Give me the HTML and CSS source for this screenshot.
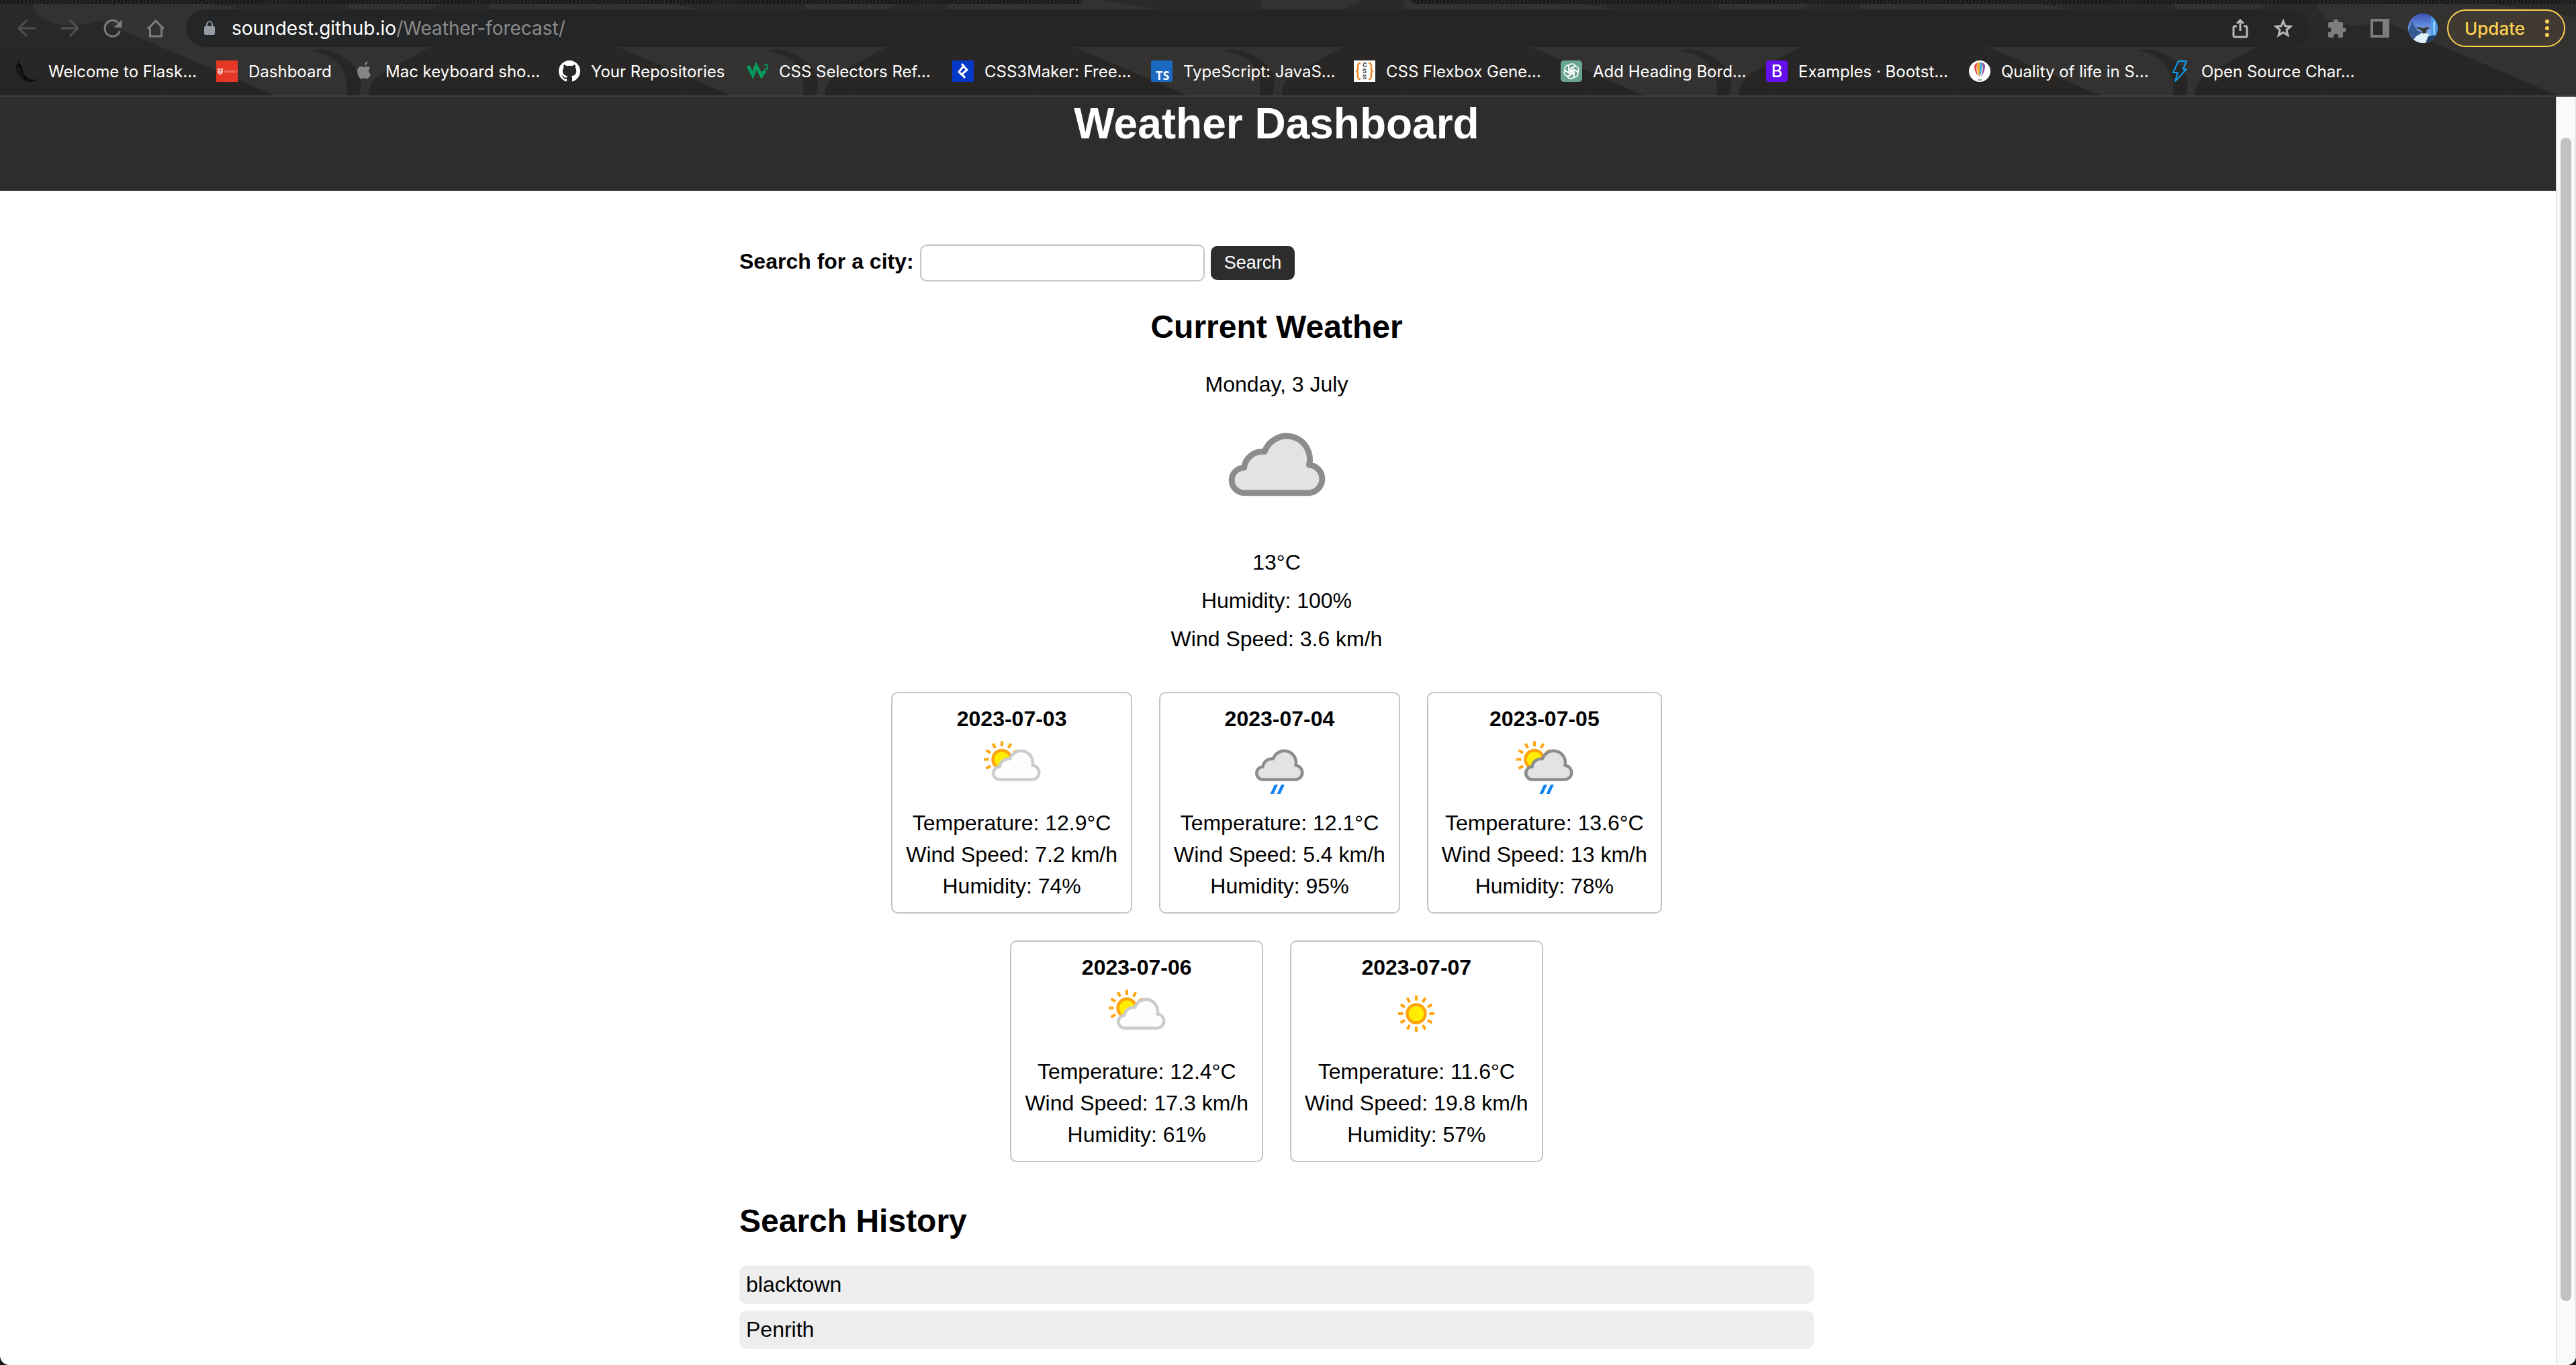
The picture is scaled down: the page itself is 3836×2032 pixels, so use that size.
FILE: index.html
```html
<!DOCTYPE html>
<html lang="en">
<head>
<meta charset="utf-8">
<title>Weather Dashboard</title>
<link rel="stylesheet" href="styles.css">
</head>
<body>
<svg class="sprite" width="0" height="0" aria-hidden="true">
  <defs>
    <path id="cloud-shape" stroke-width="9" stroke-linejoin="round" d="M52 127H146A21 21 0 0 0 149 85A35 35 0 0 0 82 65A28 28 0 0 0 51 89A19 19 0 0 0 52 127Z"/>
    <path id="rain-drops" fill="#0f84f0" d="M86 170L99 142H109L96 170ZM106 170L119 142H129L116 170Z"/>
    <g id="sun-shape">
      <circle r="27" fill="#ffee00" stroke="#ffa40d" stroke-width="9"/>
      <path stroke="#ffa40d" stroke-width="8" d="M0-39V-54M0 39V54M-39 0H-54M39 0H54M19.500-33.800L27-46.800M33.800-19.500L46.800-27M33.800 19.500L46.800 27M19.500 33.800L27 46.800M-19.500 33.800L-27 46.800M-33.800 19.500L-46.800 27M-33.800-19.500L-46.800-27M-19.500-33.800L-27-46.800"/>
    </g>
    <symbol id="cloudy" viewBox="0 -2 200 200"><use href="#cloud-shape" fill="#e3e3e6" stroke="#8b8c8e"/></symbol>
    <symbol id="partly-cloudy" viewBox="0 0 200 200"><use href="#sun-shape" x="70" y="67"/><use href="#cloud-shape" x="12" fill="#fdfdfd" stroke="#cbcccc"/></symbol>
    <symbol id="rain" viewBox="0 0 200 200"><use href="#cloud-shape" fill="#e3e3e6" stroke="#8b8c8e"/><use href="#rain-drops" x="-13"/></symbol>
    <symbol id="sun-rain" viewBox="0 0 200 200"><use href="#sun-shape" x="70" y="67"/><use href="#cloud-shape" x="12" fill="#e3e3e6" stroke="#8b8c8e"/><use href="#rain-drops" x="-1"/></symbol>
    <symbol id="sunny" viewBox="0 0 200 200"><use href="#sun-shape" x="100" y="84"/></symbol>
  </defs>
</svg>

<div class="browser">
  <svg class="theme" aria-hidden="true">
    <defs>
      <pattern id="theme-tile" width="680" height="144" patternUnits="userSpaceOnUse">
        <path fill="#333231" d="M49 0Q52 38 110 38Q135 36 147 30L413 144H516Q522 85 464 76Q480 68 510 84Q548 108 534 144H549Q545 118 585 100L640 70L520 40L280 0H80Q92 26 122 22Q95 12 84 0ZM517 0H667L640 14H520Z"/>
      </pattern>
    </defs>
    <rect width="100%" height="100%" fill="url(#theme-tile)"/>
  </svg>
  <div class="tab-strip"><span class="tab-strip__inactive"></span><span class="tab-strip__active"></span><span class="tab-strip__rest"></span></div>
  <div class="toolbar">
    <nav class="nav" aria-label="Navigation">
      <button class="icon-button dim" aria-label="Back"><svg viewBox="0 0 28 28"><path d="M27 14H2M14 2L2 14L14 26"/></svg></button>
      <button class="icon-button dim" aria-label="Forward"><svg viewBox="0 0 28 28"><path d="M1 14H26M14 2L26 14L14 26"/></svg></button>
      <button class="icon-button" aria-label="Reload"><svg viewBox="0 0 28 28"><path d="M24.500 18A11.500 12 0 1 1 22 6" /><path class="solid" d="M27.500 1V13H15.500Z"/></svg></button>
      <button class="icon-button" aria-label="Home"><svg viewBox="0 0 28 28"><path d="M2 15L14 3L26 15M5.500 12V26H22.500V12"/></svg></button>
    </nav>
    <div class="address">
      <svg class="lock" viewBox="0 0 16 22" aria-hidden="true"><path d="M4 10V5.500a4 4.500 0 0 1 8 0V10" fill="none" stroke="#949ba2" stroke-width="2"/><rect y="8" width="16" height="13" rx="2" fill="#949ba2"/></svg>
      <a class="url" href="#">soundest.github.io<span class="url__path">/Weather-forecast/</span></a>
      <button class="icon-button light" aria-label="Share"><svg viewBox="0 0 28 28"><path d="M9 11H6Q4 11 4 13V25Q4 27 6 27H22Q24 27 24 25V13Q24 11 22 11H19M14 18V2M9 7L14 2L19 7"/></svg></button>
      <button class="icon-button light" aria-label="Bookmark this page"><svg viewBox="0 0 28 28"><path d="M14 3.500L17 10.800L25 11.400L18.900 16.500L20.900 24.500L14 20.200L7.100 24.500L9.100 16.500L3 11.400L11 10.800Z"/></svg></button>
    </div>
    <div class="actions">
      <button class="icon-button" aria-label="Extensions"><svg viewBox="0 0 28 28"><path class="solid" d="M3 5H9V4A3.500 3.500 0 0 1 16 4V5H21Q23 5 23 7V13H24A3.500 3.500 0 0 1 24 20H23V26Q23 28 21 28H16V26A3.500 3.500 0 0 0 9 26V28H3Q1 28 1 26V20H2A3.500 3.500 0 0 0 2 13H1V7Q1 5 3 5Z"/></svg></button>
      <button class="icon-button" aria-label="Side panel"><svg viewBox="0 0 28 28"><path class="solid" fill-rule="evenodd" d="M0 0H28V28H0ZM4 4V24H18V4Z"/></svg></button>
      <button class="icon-button avatar" aria-label="Profile"><svg viewBox="0 0 44 44"><defs><linearGradient id="sky" x2="0" y2="1"><stop offset="0" stop-color="#3c4fb0"/><stop offset=".5" stop-color="#6c9be6"/><stop offset="1" stop-color="#a9cdec"/></linearGradient><clipPath id="round"><circle cx="22" cy="22" r="22"/></clipPath></defs><g clip-path="url(#round)"><rect width="44" height="44" fill="url(#sky)"/><path fill="#355a91" d="M0 26L6 12L13 25L22 29L18 44H0Z"/><path fill="#4b9be6" d="M34 4L44 12V36H34Z"/><path fill="#9dd0ff" d="M37 14L40 11V32H38Z"/><path fill="#dff0fa" d="M12 34L22 28L31 31L32 44H14L8 39Z"/><path fill="#1d3c68" d="M30 34L44 32V44H26Z"/><path fill="#3c3a38" d="M11 22L16 20L22 22L28 20L33 22L28 24L27 29L22 30L20 26L16 23Z"/></g></svg></button>
      <button class="update">Update<svg viewBox="0 0 6 26" aria-hidden="true"><circle cx="3" cy="3" r="3"/><circle cx="3" cy="13" r="3"/><circle cx="3" cy="23" r="3"/></svg></button>
    </div>
  </div>
  <nav class="bookmarks" aria-label="Bookmarks">
    <a href="#"><svg viewBox="0 0 32 32"><path fill="#0c0c0c" d="M3 0L5 5Q9 6 9 9Q9 23 20 28L31 29Q25 33 17 31Q3 26 0 11Q0 6 3 5Z"/><path d="M3 10Q5 20 12 26" fill="none" stroke="#3a3a3a"/></svg><span>Welcome to Flask…</span></a>
    <a href="#"><svg viewBox="0 0 32 32"><rect width="32" height="32" fill="#e63626"/><path fill="#fbdcd8" d="M2 12H10V17Q9 20 6 21Q3 20 2 17Z"/><path d="M2 15H10M6 12V20" stroke="#e63626"/><text x="12" y="18" font-size="5" fill="#fbdcd8" font-family="Liberation Serif, serif">SYDNEY</text></svg><span>Dashboard</span></a>
    <a href="#"><svg viewBox="0 0 32 32"><path fill="#858585" d="M21.500 1Q22 5 17 8Q16 4 21.500 1ZM16 10Q22 7 25.500 11Q20 15 26 21Q23 28 19.500 27Q16 25.500 13 27Q9 28 6.500 20Q5 11 10 9Q12 8 16 10Z"/></svg><span>Mac keyboard sho…</span></a>
    <a href="#"><svg viewBox="0 0 16 16"><path fill="#fff" d="M8 0C3.580 0 0 3.580 0 8c0 3.540 2.290 6.530 5.470 7.590.4.070.55-.17.55-.38 0-.19-.01-.82-.01-1.490-2.010.37-2.530-.49-2.690-.94-.09-.23-.48-.94-.82-1.130-.28-.15-.68-.52-.01-.53.63-.01 1.080.58 1.230.82.72 1.210 1.870.87 2.330.66.07-.52.28-.87.51-1.070-1.780-.2-3.640-.89-3.640-3.950 0-.87.31-1.590.82-2.150-.08-.2-.36-1.020.08-2.120 0 0 .67-.21 2.200.82a7.600 7.600 0 0 1 4 0c1.530-1.040 2.200-.82 2.200-.82.44 1.100.16 1.920.08 2.120.51.56.82 1.270.82 2.150 0 3.070-1.870 3.750-3.650 3.950.29.25.54.73.54 1.480 0 1.070-.01 1.930-.01 2.200 0 .21.15.46.55.38A8.010 8.010 0 0 0 16 8c0-4.420-3.580-8-8-8z"/></svg><span>Your Repositories</span></a>
    <a href="#"><svg viewBox="0 0 32 32"><path fill="none" stroke="#079b5c" stroke-width="5" d="M2 8L9 22L14 8L22 23L27 15"/><text x="25" y="14" font-size="12" font-weight="700" fill="#079b5c">3</text></svg><span>CSS Selectors Ref…</span></a>
    <a href="#"><svg viewBox="0 0 32 32"><rect width="32" height="32" fill="#0438c9"/><path fill="none" stroke="#fff" stroke-width="3" d="M14 5L17 8L10 17L14 21L22 14L17 9M14 20L19 26"/></svg><span>CSS3Maker: Free…</span></a>
    <a href="#"><svg viewBox="0 0 32 32"><rect width="32" height="32" rx="3" fill="#1b6ac2"/><text x="7" y="29" font-size="18" font-weight="700" fill="#fff" font-family="Open Sans, sans-serif">TS</text></svg><span>TypeScript: JavaS…</span></a>
    <a href="#"><svg viewBox="0 0 32 32"><rect width="32" height="32" fill="#fff"/><path fill="none" stroke="#ef8b2c" stroke-width="2.500" d="M10 4Q6 4 6 8V13Q6 16 3 16Q6 16 6 19V24Q6 28 10 28M22 4Q26 4 26 8V13Q26 16 29 16Q26 16 26 19V24Q26 28 22 28"/><g fill="#444" font-size="9" font-weight="700"><text x="13" y="10">C</text><text x="13" y="19">S</text><text x="13" y="28">S</text></g></svg><span>CSS Flexbox Gene…</span></a>
    <a href="#"><svg viewBox="0 0 32 32"><rect width="32" height="32" rx="5" fill="#6aa594"/><g fill="none" stroke="#fff" stroke-width="1.600"><path id="petal" d="M12 18V10Q12 5 17 5Q20 5 22 8L16 11.500V18"/><use href="#petal" transform="rotate(60 16 16)"/><use href="#petal" transform="rotate(120 16 16)"/><use href="#petal" transform="rotate(180 16 16)"/><use href="#petal" transform="rotate(240 16 16)"/><use href="#petal" transform="rotate(300 16 16)"/></g></svg><span>Add Heading Bord…</span></a>
    <a href="#"><svg viewBox="0 0 32 32"><rect width="32" height="32" rx="4" fill="#6610f2"/><text x="16" y="25" font-size="25" font-weight="500" text-anchor="middle" fill="#fff">B</text></svg><span>Examples · Bootst…</span></a>
    <a href="#"><svg viewBox="0 0 32 32"><circle cx="16" cy="16" r="16" fill="#fff"/><path fill="#e0443c" d="M8 8Q10 4 13 3Q9 12 14 24Q8 17 8 8Z"/><path fill="#f0a830" d="M13 3H16V25Q10 12 13 3Z"/><path fill="#49b5d6" d="M16 3H19Q22 12 16 25Z"/><path fill="#9b4aa0" d="M19 3Q23 4 24 8Q24 17 18 24Q23 12 19 3Z"/><path stroke="#999" stroke-width="2" d="M13 29H19"/></svg><span>Quality of life in S…</span></a>
    <a href="#"><svg viewBox="0 0 32 32"><path fill="none" stroke="#0e9cf0" stroke-width="2" stroke-linejoin="round" d="M14 1H26L21 13H26L9 31L13 18H6Z"/></svg><span>Open Source Char…</span></a>
  </nav>
</div>

<div class="viewport">
  <div class="page">
    <header class="banner"><h1>Weather Dashboard</h1></header>
    <main class="content">
      <form class="search">
        <label for="city">Search for a city:</label>
        <input id="city" type="text">
        <button type="button">Search</button>
      </form>
      <section class="current">
        <h2>Current Weather</h2>
        <p>Monday, 3 July</p>
        <svg class="current__icon" role="img" aria-label="Cloudy"><use href="#cloudy"/></svg>
        <p>13°C</p>
        <p>Humidity: 100%</p>
        <p>Wind Speed: 3.6 km/h</p>
      </section>
      <section class="forecast" aria-label="Forecast">
        <article class="card"><h3>2023-07-03</h3><svg><use href="#partly-cloudy"/></svg><p>Temperature: 12.9°C</p><p>Wind Speed: 7.2 km/h</p><p>Humidity: 74%</p></article>
        <article class="card"><h3>2023-07-04</h3><svg><use href="#rain"/></svg><p>Temperature: 12.1°C</p><p>Wind Speed: 5.4 km/h</p><p>Humidity: 95%</p></article>
        <article class="card"><h3>2023-07-05</h3><svg><use href="#sun-rain"/></svg><p>Temperature: 13.6°C</p><p>Wind Speed: 13 km/h</p><p>Humidity: 78%</p></article>
        <article class="card"><h3>2023-07-06</h3><svg><use href="#partly-cloudy"/></svg><p>Temperature: 12.4°C</p><p>Wind Speed: 17.3 km/h</p><p>Humidity: 61%</p></article>
        <article class="card"><h3>2023-07-07</h3><svg><use href="#sunny"/></svg><p>Temperature: 11.6°C</p><p>Wind Speed: 19.8 km/h</p><p>Humidity: 57%</p></article>
      </section>
      <section class="history">
        <h2>Search History</h2>
        <ul>
          <li>blacktown</li>
          <li>Penrith</li>
        </ul>
      </section>
    </main>
  </div>
  <div class="scrollbar" aria-hidden="true"><span class="scrollbar__thumb"></span></div>
</div>
</body>
</html>
```
FILE: styles.css
```css
* {
  box-sizing: border-box;
}

body {
  margin: 0;
  min-height: 100vh;
  display: flex;
  flex-direction: column;
  background: #161616;
  color: #000;
  font-family: "Liberation Sans", Arial, sans-serif;
  font-size: 32px;
  line-height: 47px;
}

h1, h2, h3, p, ul {
  margin: 0;
  padding: 0;
}

button, input {
  font: inherit;
}

.sprite {
  position: absolute;
}

/* Browser chrome */

.browser {
  position: relative;
  isolation: isolate;
  border-bottom: 2px solid #403f3d;
  background: linear-gradient(#2c2a28, #262523);
  color: #fff;
  font-family: Inter, Roboto, sans-serif;
}

.theme {
  position: absolute;
  inset: 0;
  z-index: -1;
  width: 100%;
  height: 100%;
}

.tab-strip {
  display: flex;
  height: 6px;
}

.tab-strip__inactive,
.tab-strip__rest {
  background: repeating-linear-gradient(115deg, #141413 0 2px, #272726 2px 5px);
}

.tab-strip__inactive {
  width: 42%;
  border-bottom-right-radius: 6px;
}

.tab-strip__active {
  width: 490px;
}

.tab-strip__rest {
  flex: 1;
  border-bottom-left-radius: 6px;
}

.toolbar {
  display: flex;
  align-items: center;
  padding: 8px 16px 0 8px;
}

.nav,
.actions {
  display: flex;
  align-items: center;
}

.nav {
  margin-right: 13px;
}

.icon-button {
  display: flex;
  align-items: center;
  justify-content: center;
  width: 64px;
  height: 56px;
  padding: 0;
  border: 0;
  background: none;
  color: #7c7c7c;
}

.icon-button svg {
  width: 28px;
  height: 28px;
  overflow: visible;
  fill: none;
  stroke: currentColor;
  stroke-width: 3;
}

.icon-button .solid {
  fill: currentColor;
  stroke: none;
}

.icon-button.dim {
  color: #50504e;
}

.icon-button.light {
  color: #b9b9b9;
}

.icon-button.avatar svg {
  width: 44px;
  height: 44px;
  stroke: none;
}

.address {
  flex: 1;
  display: flex;
  align-items: center;
  height: 56px;
  padding: 0 5px 0 27px;
  border-radius: 28px;
  background: #232527;
}

.lock {
  width: 16px;
  height: 22px;
}

.url {
  flex: 1;
  margin-left: 25px;
  color: #fff;
  font-size: 28px;
  text-decoration: none;
}

.url__path {
  color: #8b8b8b;
}

.actions {
  margin-left: 11px;
}

.update {
  display: flex;
  align-items: center;
  justify-content: space-between;
  width: 176px;
  height: 56px;
  margin-left: 4px;
  padding: 0 22px 0 24px;
  border: 2px solid #fdd04f;
  border-radius: 28px;
  background: #403a32;
  color: #fdd04f;
  font-size: 26px;
  font-weight: 500;
}

.update svg {
  width: 6px;
  height: 26px;
  fill: currentColor;
}

.bookmarks {
  display: grid;
  grid-template-columns: 298px 204px 306px 280px 306px 296px 302px 308px 306px 302px 298px 1fr;
  padding: 20px 24px;
}

.bookmarks a {
  display: flex;
  align-items: center;
  gap: 16px;
  height: 32px;
  color: #fff;
  font-size: 24px;
  text-decoration: none;
  white-space: nowrap;
}

.bookmarks svg {
  width: 32px;
  height: 32px;
  overflow: visible;
}

/* Web page */

.viewport {
  flex: 1;
  display: flex;
  border-radius: 0 0 14px 14px;
  overflow: hidden;
  background: #fff;
}

.page {
  flex: 1;
}

.banner {
  padding: 4px 4px 64px 0;
  background: #2d2d2d;
  color: #fff;
  text-align: center;
}

h1 {
  font-size: 64px;
  line-height: 72px;
}

h2 {
  font-size: 48px;
  line-height: 56px;
}

.content {
  max-width: 1604px;
  margin: 0 auto;
  padding: 80px 4px 24px 0;
}

.search {
  display: flex;
  align-items: center;
  gap: 9px;
}

.search label {
  padding-bottom: 4px;
  font-weight: 700;
}

.search input {
  width: 424px;
  height: 55px;
  padding: 8px;
  border: 2px solid #c4c4c4;
  border-radius: 10px;
}

.search button {
  height: 51px;
  padding: 0 20px;
  border: 0;
  border-radius: 10px;
  background: #2d2d2d;
  color: #fff;
  font-size: 27px;
}

.current {
  display: flex;
  flex-direction: column;
  align-items: center;
  gap: 10px;
  padding: 40px 0 55px;
}

.current h2 {
  margin-bottom: 24px;
}

.current__icon {
  width: 198px;
  height: 198px;
}

.forecast {
  display: flex;
  flex-wrap: wrap;
  justify-content: center;
  gap: 40px;
  padding: 0 40px;
}

.card {
  padding: 15px 20px;
  border: 2px solid #c4c4c4;
  border-radius: 10px;
  text-align: center;
}

.card h3 {
  font-size: 32px;
  line-height: 47px;
}

.card svg {
  display: block;
  width: 100px;
  height: 100px;
  margin: 3px auto 5px;
}

.history {
  padding-top: 60px;
}

.history ul {
  display: grid;
  gap: 10px;
  margin-top: 38px;
  list-style: none;
}

.history li {
  padding: 5px 10px;
  border-radius: 10px;
  background: #eee;
}

/* Scrollbar gutter */

.scrollbar {
  display: flex;
  flex-direction: column;
  align-items: center;
  width: 30px;
  border: solid #e6e6e6;
  border-width: 0 2px;
  background: #fafafa;
}

.scrollbar::before {
  content: "";
  flex: 61;
}

.scrollbar::after {
  content: "";
  flex: 95;
}

.scrollbar__thumb {
  flex: 1732;
  width: 16px;
  border-radius: 8px;
  background: #c1c1c1;
}
```
